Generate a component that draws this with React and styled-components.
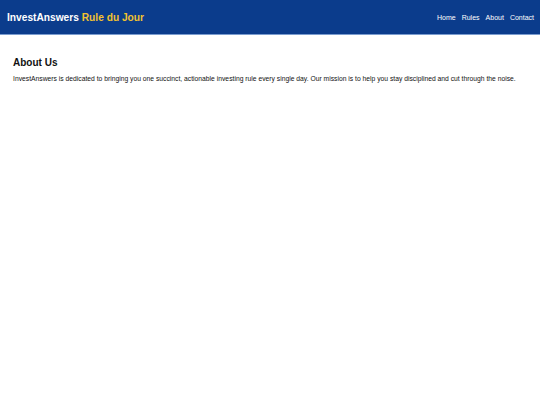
import React from 'react'
import styled, { createGlobalStyle } from 'styled-components'

const GlobalStyle = createGlobalStyle`
    body {
        margin: 0;
        background: #ffffff;
        font-family: "Liberation Sans", Arial, sans-serif;
        color: #111111;
    }
`

const App = () => {
    return (
        <>
            <GlobalStyle />
            <Header>
                <Brand>
                    InvestAnswers <Accent>Rule du Jour</Accent>
                </Brand>
                <Nav>
                    <NavLink href="#">Home</NavLink>
                    <NavLink href="#">Rules</NavLink>
                    <NavLink href="#">About</NavLink>
                    <NavLink href="#">Contact</NavLink>
                </Nav>
            </Header>
            <Main>
                <Title>About Us</Title>
                <Text>
                    InvestAnswers is dedicated to bringing you one succinct, actionable investing rule every single day. Our mission is to help you stay disciplined and cut through the noise.
                </Text>
            </Main>
        </>
    )
}

export default App

const Header = styled.header`
    height: 34px;
    background-color: #0b3c8c;
    border-bottom: 1px solid #7a9ccf;
    display: flex;
    align-items: center;
    justify-content: space-between;
    padding: 0 6px 0 7px;
`

const Brand = styled.div`
    color: #ffffff;
    font-weight: bold;
    font-size: 10.2px;
`

const Accent = styled.span`
    color: #f2c230;
`

const Nav = styled.nav`
    display: flex;
    gap: 6px;
`

const NavLink = styled.a`
    color: #ffffff;
    text-decoration: none;
    font-size: 7px;
`

const Main = styled.main`
    padding: 22px 13px;
`

const Title = styled.h2`
    margin: 0 0 7px;
    font-size: 10px;
    font-weight: bold;
    color: #111111;
`

const Text = styled.p`
    margin: 0;
    font-size: 6.75px;
    color: #111111;
`
